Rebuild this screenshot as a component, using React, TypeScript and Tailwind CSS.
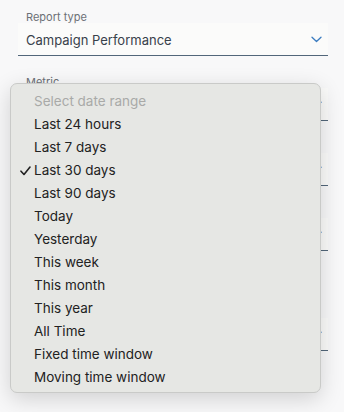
import React from "react";

const options = [
  "Last 24 hours",
  "Last 7 days",
  "Last 30 days",
  "Last 90 days",
  "Today",
  "Yesterday",
  "This week",
  "This month",
  "This year",
  "All Time",
  "Fixed time window",
  "Moving time window",
];

function Chevron() {
  return (
    <svg width="11" height="7" viewBox="0 0 11 7" fill="none" className="shrink-0">
      <path d="M1 1.2l4.5 4.3L10 1.2" stroke="#3b7cc0" strokeWidth="1.3" strokeLinecap="round" strokeLinejoin="round" />
    </svg>
  );
}

// fields under the open menu have no visible text, so only the top two carry labels
function Field({ label = "", value = "", className = "" }: { label?: string; value?: string; className?: string }) {
  return (
    <div className={className}>
      <div className="h-[12px] pl-2 text-[11px] leading-[12px] text-[#6c7076]">{label}</div>
      <div className="h-[33px] bg-[#fbfbfa] border-b border-[#52667a] flex items-center justify-between pl-2 pr-[6px]">
        <span className="pt-[3px] text-[13px] text-[#38414b]">{value}</span>
        <Chevron />
      </div>
    </div>
  );
}

export default function App() {
  return (
    <div
      className="relative w-[344px] h-[412px] overflow-hidden bg-[#f8f8f9]"
      style={{ fontFamily: "Inter, 'Liberation Sans', sans-serif" }}
    >
      <div className="flex flex-col pl-[18px] pr-[16px] pt-[11px]">
        <Field label="Report type" value="Campaign Performance" />
        <Field label="Metric" className="mt-[20px]" />
        <Field className="mt-[20px]" />
        <Field className="mt-[20px]" />
        <Field className="mt-[55px]" />
      </div>

      {/* dropdown menu */}
      <div className="absolute left-[10px] top-[83px] w-[311px] rounded-[7px] border border-[#c9cac8] bg-[#e6e7e4] pt-[6px] pb-[3px] shadow-[0_6px_22px_rgba(0,0,0,0.16)]">
        <div className="h-[23px] flex items-center pl-[23px] text-[13.5px] text-[#a9aaa8]">Select date range</div>
        {options.map((o) => (
          <div key={o} className="relative h-[23px] flex items-center pl-[23px] text-[13.5px] text-[#222]">
            {o === "Last 30 days" && (
              <svg width="11" height="10" viewBox="0 0 11 10" className="absolute left-[9px] top-[7px]">
                <path d="M1 5.2l3 3.3L10 1" stroke="#222" strokeWidth="1.6" fill="none" strokeLinecap="round" strokeLinejoin="round" />
              </svg>
            )}
            {o}
          </div>
        ))}
      </div>
    </div>
  );
}
